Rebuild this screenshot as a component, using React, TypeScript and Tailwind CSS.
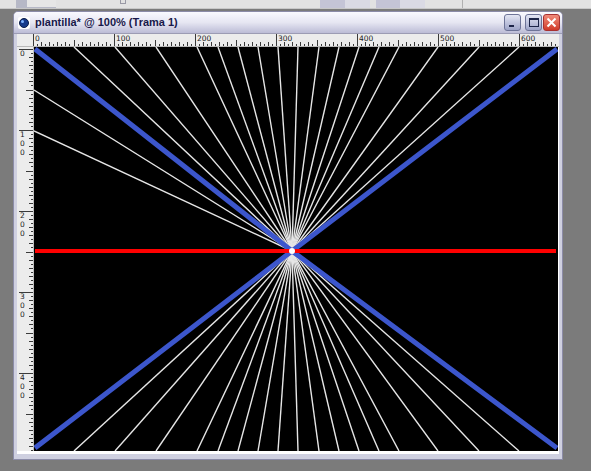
import React from 'react';

const SCALE = 0.81;
const TOP_X = [40, 81, 122, 163, 184, 204, 224, 244, 264, 285, 305, 325, 345, 365, 404, 445, 485];
const LEFT_Y = [43, 84];
const CX = 258;
const CY = 204;

function TopRuler() {
  const ticks = [];
  for (let u = 0; u <= 645; u += 5) {
    const x = Math.round(u * SCALE) + 0.5;
    let h = 2;
    if (u % 100 === 0) h = 12;
    else if (u % 50 === 0) h = 6;
    else if (u % 10 === 0) h = 4;
    ticks.push(<line key={u} x1={x} y1={12} x2={x} y2={12 - h} stroke="#3a3a3a" strokeWidth={1} />);
  }
  const labels = [];
  for (let u = 0; u <= 600; u += 100) {
    labels.push(
      <text key={u} x={Math.round(u * SCALE) + 2} y={7} fontSize={7.5} fill="#222" fontFamily="'DejaVu Sans', sans-serif">
        {u}
      </text>
    );
  }
  return (
    <svg width={526} height={12} className="block">
      {ticks}
      {labels}
    </svg>
  );
}

function LeftRuler() {
  const ticks = [];
  for (let u = 0; u <= 495; u += 5) {
    const y = Math.round(u * SCALE) + 2.5;
    let h = 2;
    if (u % 100 === 0) h = 14;
    else if (u % 50 === 0) h = 7;
    else if (u % 10 === 0) h = 4;
    ticks.push(<line key={u} x1={16} y1={y} x2={16 - h} y2={y} stroke="#3a3a3a" strokeWidth={1} />);
  }
  const labels = [];
  for (let u = 0; u <= 400; u += 100) {
    const y0 = Math.round(u * SCALE) + 9;
    String(u)
      .split('')
      .forEach((d, i) => {
        labels.push(
          <text key={`${u}-${i}`} x={3} y={y0 + i * 9} fontSize={7.5} fill="#222" fontFamily="'DejaVu Sans', sans-serif">
            {d}
          </text>
        );
      });
  }
  return (
    <svg width={16} height={404} className="block">
      {ticks}
      {labels}
    </svg>
  );
}

function Drawing() {
  return (
    <svg width={524} height={404} className="block bg-black">
      {TOP_X.map((x) => (
        <line key={`t${x}`} x1={CX} y1={CY} x2={x} y2={0} stroke="#e6e6e6" strokeWidth={1.4} />
      ))}
      {TOP_X.map((x) => (
        <line key={`b${x}`} x1={CX} y1={CY} x2={x} y2={404} stroke="#e6e6e6" strokeWidth={1.4} />
      ))}
      {LEFT_Y.map((y) => (
        <line key={`l${y}`} x1={CX} y1={CY} x2={0} y2={y} stroke="#e6e6e6" strokeWidth={1.4} />
      ))}
      <polyline points={`1,2 ${CX},${CY} 523,401`} fill="none" stroke="#3c56cc" strokeWidth={5} />
      <polyline points={`523,2 ${CX},${CY} 1,401`} fill="none" stroke="#3c56cc" strokeWidth={5} />
      <rect x={1} y={CY - 2} width={521} height={4} fill="#ff0000" />
      <circle cx={CX} cy={CY} r={3} fill="#ffffff" />
    </svg>
  );
}

function WinButton({ kind }: { kind: 'min' | 'max' | 'close' }) {
  if (kind === 'close') {
    return (
      <div className="w-[17px] h-[17px] rounded-[3px] border border-[#a83030] bg-gradient-to-b from-[#f08a7a] to-[#d03828] flex items-center justify-center">
        <svg width={11} height={11}>
          <path d="M1.5 1.5 L9.5 9.5 M9.5 1.5 L1.5 9.5" stroke="#fff" strokeWidth={2} />
        </svg>
      </div>
    );
  }
  return (
    <div className="w-[17px] h-[17px] rounded-[3px] border border-[#6e7498] bg-gradient-to-b from-[#e4e6f4] to-[#9ea4c8] flex items-center justify-center">
      {kind === 'min' ? (
        <div className="w-[5px] h-[2px] bg-[#1c2448] mt-[6px] -ml-[3px]" />
      ) : (
        <div className="w-[10px] h-[9px] border border-[#1c2448] border-t-2" />
      )}
    </div>
  );
}

export default function App() {
  return (
    <div className="w-[591px] h-[471px] bg-[#7b7b7b] overflow-hidden" style={{ fontFamily: "'Liberation Sans', Arial, sans-serif" }}>
      {/* top toolbar remnant */}
      <div className="h-[9px] bg-[#e2e2e2] border-b border-[#c8c8c8] flex">
        <div className="ml-[16px] w-[40px] h-[8px] bg-[#b6b8c6] flex">
          <div className="ml-[11px] w-[29px] h-[7px] bg-[#e6e6e6]" />
        </div>
        <div className="ml-[64px] w-[6px] h-[4px] border border-[#9a9aa6] border-t-0" />
        <div className="ml-[194px] w-[25px] h-[8px] bg-[#c4c4d6]" />
        <div className="w-[25px] h-[8px] bg-[#dadae4]" />
        <div className="ml-[6px] w-[24px] h-[8px] bg-[#c4c4d6]" />
        <div className="w-[25px] h-[8px] bg-[#dadae4]" />
        <div className="ml-[37px] w-[1px] h-[8px] bg-[#b0b0b0]" />
      </div>

      {/* window */}
      <div className="mt-[2px] ml-[13px] w-[550px] h-[449px] rounded-t-[5px] bg-[#cfd0e0] border border-[#8c8ca8] flex flex-col">
        {/* title bar */}
        <div className="h-[22px] shrink-0 rounded-t-[4px] bg-gradient-to-b from-[#fafaff] via-[#e6e6f2] to-[#bcbcd6] flex items-center pl-[4px] pr-[2px] border-b border-[#9c9cb4]">
          <div className="w-[12px] h-[12px] rounded-[2px] bg-white flex items-center justify-center">
            <div className="w-[10px] h-[10px] rounded-full bg-[#163a8a] border border-[#0b1c48] flex items-start justify-start">
              <div className="w-[3px] h-[3px] rounded-full bg-[#7fb4ff] ml-[1px] mt-[1px]" />
            </div>
          </div>
          <span className="ml-[5px] text-[11px] leading-none text-[#18184a] font-bold">plantilla* @ 100% (Trama 1)</span>
          <div className="ml-auto flex gap-[1px]">
            <WinButton kind="min" />
            <div className="w-[2px]" />
            <WinButton kind="max" />
            <WinButton kind="close" />
          </div>
        </div>

        {/* content */}
        <div className="flex-1 flex pl-[3px] pr-[3px] pb-[5px]">
          <div className="flex flex-col bg-white">
            <div className="flex bg-[#ececec] border-b border-[#b8b8b8]">
              <div className="w-[16px] h-[12px] bg-[#ececec]" />
              <TopRuler />
            </div>
            <div className="flex">
              <div className="bg-[#ececec] border-r border-[#c0c0c0]">
                <LeftRuler />
              </div>
              <Drawing />
              <div className="w-[1px]" />
            </div>
            <div className="h-[3px] bg-white" />
          </div>
        </div>
      </div>
    </div>
  );
}
